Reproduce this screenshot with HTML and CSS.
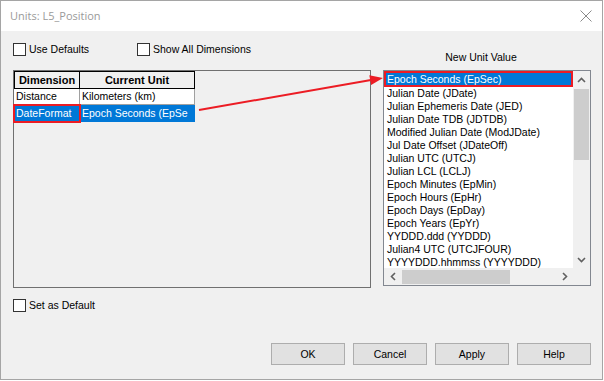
FILE: index.html
```html
<!DOCTYPE html>
<html lang="en">
<head>
    <meta charset="UTF-8">
    <title>Units: L5_Position</title>
    <link rel="stylesheet" href="styles.css">
</head>
<body>
    <div class="window">
        <div class="titlebar">
            <span class="title">Units: L5_Position</span>
            <svg class="close" width="12" height="12" viewBox="0 0 12 12">
                <path d="M0.5 0.5 L11.5 11.5 M11.5 0.5 L0.5 11.5" stroke="#8a8a8a" stroke-width="1" fill="none"/>
            </svg>
        </div>

        <div class="content">
            <div class="top-row">
                <label class="check first"><span class="box"></span>Use Defaults</label>
                <label class="check"><span class="box"></span>Show All Dimensions</label>
                <div class="unit-label">New Unit Value</div>
            </div>

            <div class="main">
                <div class="group">
                    <div class="grid">
                        <div class="head">Dimension</div>
                        <div class="head">Current Unit</div>
                        <div class="cell">Distance</div>
                        <div class="cell">Kilometers (km)</div>
                        <div class="cell sel marked">DateFormat</div>
                        <div class="cell sel">Epoch Seconds (EpSe</div>
                    </div>
                </div>

                <div class="listbox">
                    <div class="list-area">
                        <div class="items">
                            <div class="item sel marked">Epoch Seconds (EpSec)</div>
                            <div class="item">Julian Date (JDate)</div>
                            <div class="item">Julian Ephemeris Date (JED)</div>
                            <div class="item">Julian Date TDB (JDTDB)</div>
                            <div class="item">Modified Julian Date (ModJDate)</div>
                            <div class="item">Jul Date Offset (JDateOff)</div>
                            <div class="item">Julian UTC (UTCJ)</div>
                            <div class="item">Julian LCL (LCLJ)</div>
                            <div class="item">Epoch Minutes (EpMin)</div>
                            <div class="item">Epoch Hours (EpHr)</div>
                            <div class="item">Epoch Days (EpDay)</div>
                            <div class="item">Epoch Years (EpYr)</div>
                            <div class="item">YYDDD.ddd (YYDDD)</div>
                            <div class="item">Julian4 UTC (UTCJFOUR)</div>
                            <div class="item">YYYYDDD.hhmmss (YYYYDDD)</div>
                        </div>
                        <div class="vscroll">
                            <div class="sb-btn">
                                <svg width="9" height="6" viewBox="0 0 9 6"><path d="M1 5 L4.5 1.5 L8 5" stroke="#606060" stroke-width="1.6" fill="none"/></svg>
                            </div>
                            <div class="vthumb"></div>
                            <div class="sb-btn bottom">
                                <svg width="9" height="6" viewBox="0 0 9 6"><path d="M1 1 L4.5 4.5 L8 1" stroke="#606060" stroke-width="1.6" fill="none"/></svg>
                            </div>
                        </div>
                    </div>
                    <div class="hscroll">
                        <div class="sb-btn">
                            <svg width="6" height="9" viewBox="0 0 6 9"><path d="M5 1 L1.5 4.5 L5 8" stroke="#606060" stroke-width="1.6" fill="none"/></svg>
                        </div>
                        <div class="hthumb"></div>
                        <div class="sb-btn right">
                            <svg width="6" height="9" viewBox="0 0 6 9"><path d="M1 1 L4.5 4.5 L1 8" stroke="#606060" stroke-width="1.6" fill="none"/></svg>
                        </div>
                        <div class="corner"></div>
                    </div>
                </div>
            </div>

            <label class="check set-default"><span class="box"></span>Set as Default</label>

            <div class="buttons">
                <button>OK</button>
                <button>Cancel</button>
                <button>Apply</button>
                <button>Help</button>
            </div>
        </div>

        <!-- red annotation arrow -->
        <svg class="arrow" width="604" height="381" viewBox="0 0 604 381">
            <line x1="199" y1="110" x2="371" y2="80" stroke="#ec1c24" stroke-width="2"/>
            <polygon points="383,78 371.1,85.1 369.3,75.3" fill="#ec1c24"/>
        </svg>
    </div>
</body>
</html>
```

FILE: styles.css
```css
body {
    margin: 0;
    background: #ffffff;
    font-family: "Liberation Sans", Arial, sans-serif;
    font-size: 10.5px;
    color: #000;
}
.window {
    position: relative;
    width: 603px;
    height: 380px;
    box-sizing: border-box;
    border: 1px solid #a5a5a5;
    display: flex;
    flex-direction: column;
}
.titlebar {
    height: 30px;
    background: #fff;
    display: flex;
    align-items: center;
    padding-left: 9px;
    padding-right: 10px;
}
.title {
    font-family: "Open Sans", "Noto Sans", sans-serif;
    font-size: 11px;
    color: #9a9a9a;
    flex: 1;
    padding-bottom: 1px;
}
.content {
    flex: 1;
    background: #f0f0f0;
    padding: 12px 11px 0 12px;
}
.top-row {
    display: flex;
    height: 27px;
    align-items: flex-start;
}
.check {
    display: flex;
    align-items: center;
    height: 13px;
    line-height: 13px;
}
.check.first {
    width: 124px;
}
.box {
    width: 13px;
    height: 13px;
    box-sizing: border-box;
    border: 1px solid #333;
    background: #fff;
    margin-right: 3px;
}
.unit-label {
    margin-left: auto;
    align-self: flex-end;
    width: 208px;
    padding-right: 12px;
    box-sizing: border-box;
    text-align: center;
    line-height: 13px;
    margin-bottom: 6px;
}
.main {
    display: flex;
    gap: 12px;
    height: 218px;
}
.group {
    width: 358px;
    height: 218px;
    box-sizing: border-box;
    border: 1px solid #707070;
}
.grid {
    display: grid;
    grid-template-columns: 66px 115px;
    grid-template-rows: 18px 16px 17px;
}
.head {
    background: #f0f0f0;
    border-top: 1px solid #000;
    border-right: 1px solid #000;
    border-bottom: 1px solid #000;
    font-weight: bold;
    font-size: 11px;
    text-align: center;
    line-height: 16px;
}
.head:first-child {
    border-left: 1px solid #000;
}
.cell {
    background: #fff;
    border-right: 1px solid #a0a0a0;
    border-bottom: 1px solid #a0a0a0;
    padding-left: 2px;
    line-height: 15px;
    white-space: nowrap;
    overflow: hidden;
}
.cell.sel {
    background: #0078d7;
    color: #fff;
    border-color: #0078d7;
    line-height: 16px;
}
.cell.marked {
    outline: 2px solid #ec1c24;
    outline-offset: -1px;
    position: relative;
}
.listbox {
    width: 208px;
    height: 216px;
    box-sizing: border-box;
    border: 1px solid #828790;
    background: #fff;
    display: flex;
    flex-direction: column;
}
.list-area {
    display: flex;
    height: 197px;
}
.items {
    width: 189px;
    overflow: hidden;
}
.item {
    line-height: 13px;
    height: 13px;
    padding-left: 3px;
    white-space: nowrap;
}
.item.sel {
    background: #0078d7;
    color: #fff;
    border: 2px solid #ec1c24;
    height: 12px;
    line-height: 12px;
    padding-left: 1px;
}
.vscroll {
    width: 17px;
    background: #f0f0f0;
    display: flex;
    flex-direction: column;
}
.sb-btn {
    width: 17px;
    height: 17px;
    display: flex;
    align-items: center;
    justify-content: center;
    flex-shrink: 0;
}
.sb-btn.bottom {
    margin-top: auto;
}
.sb-btn.right {
    margin-left: auto;
}
.vthumb {
    width: 15px;
    height: 71px;
    margin: 1px 1px 0 1px;
    background: #cdcdcd;
}
.hscroll {
    height: 17px;
    background: #f0f0f0;
    display: flex;
}
.hthumb {
    width: 108px;
    height: 14px;
    margin: 2px 0 0 1px;
    background: #cdcdcd;
}
.corner {
    width: 17px;
    height: 17px;
    background: #f0f0f0;
}
.set-default {
    margin-top: 11px;
}
.buttons {
    display: flex;
    justify-content: flex-end;
    gap: 8px;
    margin-top: 31px;
}
.buttons button {
    width: 74px;
    height: 22px;
    background: #e1e1e1;
    border: 1px solid #adadad;
    font-family: "Liberation Sans", Arial, sans-serif;
    font-size: 10.5px;
    color: #000;
    padding: 0;
}
.arrow {
    position: absolute;
    top: -1px;
    left: -1px;
    pointer-events: none;
}
```
